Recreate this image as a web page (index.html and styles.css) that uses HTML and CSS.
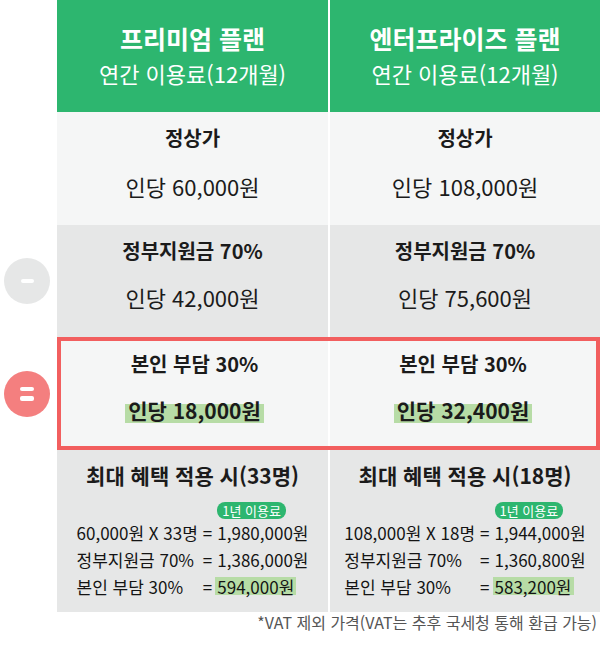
FILE: index.html
```html
<!DOCTYPE html>
<html lang="ko">
<head>
<meta charset="utf-8">
<title>플랜 비교</title>
<link rel="stylesheet" href="styles.css">
</head>
<body>
<div class="page">
  <div class="row">
    <div class="gutter"></div>
    <div class="cells">
      <div class="cell head">
        <div class="head-title">프리미엄 플랜</div>
        <div class="head-sub">연간 이용료(12개월)</div>
      </div>
      <div class="cell head">
        <div class="head-title">엔터프라이즈 플랜</div>
        <div class="head-sub">연간 이용료(12개월)</div>
      </div>
    </div>
  </div>

  <div class="row">
    <div class="gutter"></div>
    <div class="cells">
      <div class="cell light">
        <div class="cell-title">정상가</div>
        <div class="cell-value">인당 60,000원</div>
      </div>
      <div class="cell light">
        <div class="cell-title">정상가</div>
        <div class="cell-value">인당 108,000원</div>
      </div>
    </div>
  </div>

  <div class="row">
    <div class="gutter">
      <div class="sign sign-minus"><span class="bar"></span></div>
    </div>
    <div class="cells">
      <div class="cell gray">
        <div class="cell-title">정부지원금 70%</div>
        <div class="cell-value">인당 42,000원</div>
      </div>
      <div class="cell gray">
        <div class="cell-title">정부지원금 70%</div>
        <div class="cell-value">인당 75,600원</div>
      </div>
    </div>
  </div>

  <div class="row">
    <div class="gutter">
      <div class="sign sign-equal"><span class="bar"></span><span class="bar"></span></div>
    </div>
    <div class="cells cells-total">
      <div class="cell light total">
        <div class="cell-title">본인 부담 30%</div>
        <div class="cell-value strong"><span class="mark">인당 18,000원</span></div>
      </div>
      <div class="cell light total">
        <div class="cell-title">본인 부담 30%</div>
        <div class="cell-value strong"><span class="mark">인당 32,400원</span></div>
      </div>
    </div>
  </div>

  <div class="row">
    <div class="gutter"></div>
    <div class="cells">
      <div class="cell gray calc">
        <div class="calc-title">최대 혜택 적용 시(33명)</div>
        <div class="calc-grid">
          <span class="badge">1년 이용료</span>
          <span>60,000원 X 33명</span><span>=</span><span>1,980,000원</span>
          <span>정부지원금 70%</span><span>=</span><span>1,386,000원</span>
          <span>본인 부담 30%</span><span>=</span><span><span class="mark-sm">594,000원</span></span>
        </div>
      </div>
      <div class="cell gray calc">
        <div class="calc-title">최대 혜택 적용 시(18명)</div>
        <div class="calc-grid">
          <span class="badge">1년 이용료</span>
          <span>108,000원 X 18명</span><span>=</span><span>1,944,000원</span>
          <span>정부지원금 70%</span><span>=</span><span>1,360,800원</span>
          <span>본인 부담 30%</span><span>=</span><span><span class="mark-sm">583,200원</span></span>
        </div>
      </div>
    </div>
  </div>

  <p class="note">*VAT 제외 가격(VAT는 추후 국세청 통해 환급 가능)</p>
</div>
</body>
</html>
```

FILE: styles.css
```css
* {
  box-sizing: border-box;
}

html, body {
  margin: 0;
  padding: 0;
  background: #ffffff;
}

body {
  font-family: "Noto Sans CJK KR", "Noto Sans", sans-serif;
  color: #1b1b1b;
}

.page {
  width: 600px;
}

.row {
  display: flex;
}

.gutter {
  width: 57px;
  flex: none;
  display: flex;
  align-items: center;
  padding-left: 4px;
}

.cells {
  flex: 1;
  display: grid;
  grid-template-columns: 271px 1fr;
  column-gap: 2px;
  background: #ffffff;
}

.cells-total {
  border: 4px solid #f25f5f;
  grid-template-columns: 267px 1fr;
}

.cell {
  display: flex;
  flex-direction: column;
  align-items: center;
  text-align: center;
}

.light {
  background: #f5f6f6;
}

.gray {
  background: #e6e7e7;
}

/* header */
.head {
  background: #2db66f;
  color: #ffffff;
  height: 112px;
  justify-content: center;
  padding-bottom: 2px;
}

.head-title {
  font-size: 25px;
  font-weight: 700;
  line-height: 33px;
}

.head-sub {
  font-size: 22px;
  line-height: 29px;
  margin-top: 4px;
}

/* price rows */
.cell-title {
  font-size: 20px;
  font-weight: 700;
  line-height: 26px;
  margin-top: 13px;
}

.cell-value {
  font-size: 22px;
  line-height: 30px;
  margin-top: 20px;
  margin-bottom: 24px;
}

.gray .cell-value {
  margin-top: 18px;
  margin-bottom: 25px;
}

.total .cell-title {
  margin-top: 10px;
}

.total .cell-value {
  font-size: 21px;
  margin-top: 18px;
  margin-bottom: 21px;
}

.strong {
  font-weight: 700;
}

.mark {
  background: linear-gradient(to bottom, transparent 30%, #b7dca6 30%, #b7dca6 92%, transparent 92%);
  padding: 0 3px;
}

/* signs */
.sign {
  width: 46px;
  height: 46px;
  border-radius: 50%;
  display: flex;
  flex-direction: column;
  align-items: center;
  justify-content: center;
  gap: 5px;
}

.sign-minus {
  background: #e6e7e7;
}

.sign-equal {
  background: #f47f7f;
}

.sign .bar {
  display: block;
  width: 13px;
  height: 4.5px;
  border-radius: 2px;
  background: #ffffff;
}

.sign-equal .bar {
  width: 14px;
}

/* calculation block */
.calc {
  padding-top: 12px;
  padding-bottom: 12px;
}

.calc-title {
  font-size: 21px;
  font-weight: 700;
  line-height: 26px;
}

.calc-grid {
  margin-top: 14px;
  display: grid;
  grid-template-columns: auto auto auto;
  column-gap: 5px;
  font-size: 17px;
  line-height: 27px;
  text-align: left;
  color: #141414;
}

.badge {
  grid-column: 3;
  justify-self: start;
  height: 17px;
  line-height: 17px;
  padding: 0 5px;
  border-radius: 8px;
  background: #2db66f;
  color: #ffffff;
  font-size: 13px;
}

.mark-sm {
  display: inline-block;
  line-height: 17px;
  padding: 1px 2px 0;
  margin-left: -2px;
  background: #b7dca6;
}

.note {
  margin: 0;
  padding-right: 3px;
  text-align: right;
  font-size: 16px;
  line-height: 20px;
  color: #555555;
}
```
